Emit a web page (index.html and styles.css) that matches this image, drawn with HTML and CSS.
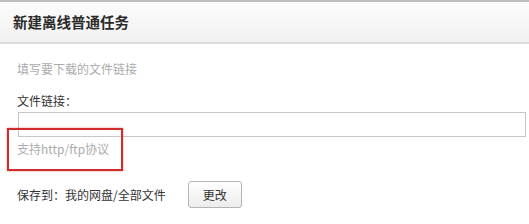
FILE: index.html
```html
<!DOCTYPE html>
<html lang="zh-CN">
<head>
    <meta charset="UTF-8">
    <title>新建离线普通任务</title>
    <link rel="stylesheet" href="styles.css">
</head>
<body>

<div class="dialog">
    <div class="dialog-header">
        <h3>新建离线普通任务</h3>
    </div>

    <div class="dialog-body">
        <p class="hint">填写要下载的文件链接</p>

        <label class="field-label" for="fileUrl">文件链接：</label>
        <input type="text" id="fileUrl" class="url-input">

        <p class="hint support">支持http/ftp协议</p>

        <div class="save-row">
            <span>保存到：我的网盘/全部文件</span>
            <button type="button" class="btn">更改</button>
        </div>
    </div>

    <!-- annotation -->
    <div class="mark"></div>
</div>

</body>
</html>
```

FILE: styles.css
```css
body {
    margin: 0;
    padding: 0;
    background-color: #ffffff;
    font-family: "Noto Sans CJK SC", "Liberation Sans", sans-serif;
    font-size: 12px;
    color: #333;
}

.dialog {
    position: relative;
}

.dialog-header {
    height: 40px;
    border-top: 2px solid #bdbdbd;
    border-bottom: 2px solid #dcdcdc;
    background: linear-gradient(#fcfcfc, #f1f1f1);
}

.dialog-header h3 {
    margin: 0;
    padding-left: 13px;
    line-height: 40px;
    font-size: 14.5px;
    font-weight: bold;
    color: #2b2b2b;
}

.dialog-body {
    padding: 0 3px 0 17px;
}

.hint {
    margin: 15px 0 0 0;
    line-height: 20px;
    color: #ababab;
}

.field-label {
    display: block;
    margin-top: 12px;
    line-height: 20px;
}

.url-input {
    display: block;
    box-sizing: border-box;
    width: calc(100% - 1px);
    height: 25px;
    margin: 1px 0 0 1px;
    border: 1px solid #c6c6c6;
    padding: 0 4px;
    outline: none;
}

.hint.support {
    margin-top: 2px;
}

.save-row {
    display: flex;
    align-items: center;
    gap: 22px;
    margin-top: 22px;
}

.btn {
    width: 54px;
    height: 27px;
    border: 1px solid #b4b4b4;
    border-radius: 3px;
    background: linear-gradient(#ffffff, #ececec);
    font-family: inherit;
    font-size: 12px;
    color: #333;
    cursor: pointer;
}

.mark {
    position: absolute;
    left: 7px;
    top: 128px;
    width: 112px;
    height: 39px;
    border: 2px solid #d22b2b;
    box-shadow: 0 0 2px rgba(210, 43, 43, 0.5);
}
```
